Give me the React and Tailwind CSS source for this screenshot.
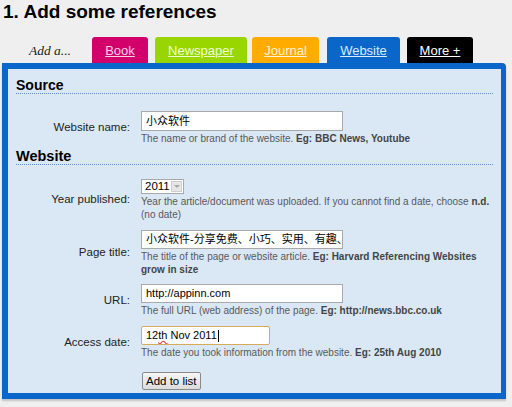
import React from "react";

const tabs = [
  { label: "Book", bg: "bg-[#d1006b]", text: "text-[#f7d3e6]", w: "w-[56px]", ml: "ml-0" },
  { label: "Newspaper", bg: "bg-[#99d600]", text: "text-[#f0ffd0]", w: "w-[92px]", ml: "ml-[7px]" },
  { label: "Journal", bg: "bg-[#ffab00]", text: "text-[#fff3d6]", w: "w-[67px]", ml: "ml-[5px]" },
  { label: "Website", bg: "bg-[#0a66c8]", text: "text-[#dcecff]", w: "w-[73px]", ml: "ml-[8px]" },
  { label: "More +", bg: "bg-black", text: "text-white", w: "w-[66px]", ml: "ml-[7px]" },
];

function Field({ label, children, help, mt }) {
  return (
    <div className={`grid grid-cols-[114px_1fr] gap-x-[11px] ${mt}`}>
      <div className="flex items-center justify-end text-[11.5px] text-[#222]">{label}</div>
      <div>
        {children}
        <div className="mt-[1px] w-[350px] text-[10px] leading-[13px] text-[#585858]">{help}</div>
      </div>
    </div>
  );
}

function TextBox({ value, width = "w-[202px]", height = "h-[19px]", focused, caret }) {
  return (
    <div
      className={`${width} ${height} flex items-center overflow-hidden whitespace-nowrap bg-white px-[4px] text-[11px] text-black ${
        focused ? "border border-[#d8ab5a] rounded-[2px]" : "border border-[#a9a9a9]"
      }`}
      style={{ fontFamily: '"Liberation Sans", "Noto Sans CJK SC", sans-serif' }}
    >
      <span>{value}</span>
      {caret && <span className="ml-[1px] inline-block h-[12px] w-px shrink-0 bg-black" />}
    </div>
  );
}

export default function App() {
  return (
    <div
      className="w-[512px] h-[407px] overflow-hidden bg-[#efefef]"
      style={{ fontFamily: '"Liberation Sans", Arial, sans-serif' }}
    >
      <h1 className="pl-[3px] text-[19px] font-bold leading-[24px] text-black">1. Add some references</h1>

      <div className="mt-[13px] flex h-[26px] items-stretch">
        <div
          className="flex w-[92px] items-center pl-[29px] pt-[2px] text-[13.5px] italic text-[#222]"
          style={{ fontFamily: '"Liberation Serif", serif' }}
        >
          Add a...
        </div>
        {tabs.map((t) => (
          <div
            key={t.label}
            className={`${t.bg} ${t.w} ${t.ml} flex items-center justify-center rounded-t-[3px] pt-[2px] text-[13px] underline ${t.text}`}
          >
            {t.label}
          </div>
        ))}
      </div>

      <div className="ml-[2px] box-border h-[336px] w-[504px] rounded-tr-[4px] border-[6px] border-r-[5px] border-[#0a66c8] bg-[#dae8f6] px-[8px] pt-[8px] shadow-[0_2px_2px_rgba(0,0,0,0.18)]">
        <h2 className="border-b border-dotted border-[#5b8fd0] text-[14px] font-bold leading-[16px] text-black">
          Source
        </h2>

        <Field
          label="Website name:"
          mt="mt-[17px]"
          help={
            <>
              The name or brand of the website. <b className="text-[#444]">Eg: BBC News, Youtube</b>
            </>
          }
        >
          <TextBox value="小众软件" height="h-[20px]" />
        </Field>

        <h2 className="mt-[3px] border-b border-dotted border-[#5b8fd0] text-[14.5px] font-bold leading-[16px] text-black">
          Website
        </h2>

        <Field
          label="Year published:"
          mt="mt-[14px]"
          help={
            <>
              Year the article/document was uploaded. If you cannot find a date, choose{" "}
              <b className="text-[#444]">n.d.</b> (no date)
            </>
          }
        >
          <div className="flex h-[15px] w-[43px] items-center justify-between border border-[#a9a9a9] bg-white pl-[3px] pr-[1px] text-[11.5px] text-black">
            <span>2011</span>
            <span className="flex h-[11px] w-[11px] items-center justify-center border border-[#cfcfcf] bg-[#e6e6e6]">
              <span className="h-0 w-0 border-x-[3px] border-t-[3px] border-x-transparent border-t-[#a8a8a8]" />
            </span>
          </div>
        </Field>

        <Field
          label="Page title:"
          mt="mt-[9px]"
          help={
            <>
              The title of the page or website article.{" "}
              <b className="text-[#444]">Eg: Harvard Referencing Websites grow in size</b>
            </>
          }
        >
          <TextBox value="小众软件-分享免费、小巧、实用、有趣、绿色的软件" />
        </Field>

        <Field
          label="URL:"
          mt="mt-[8px]"
          help={
            <>
              The full URL (web address) of the page. <b className="text-[#444]">Eg: http://news.bbc.co.uk</b>
            </>
          }
        >
          <TextBox value="http://appinn.com" />
        </Field>

        <Field
          label="Access date:"
          mt="mt-[9px]"
          help={
            <>
              The date you took information from the website. <b className="text-[#444]">Eg: 25th Aug 2010</b>
            </>
          }
        >
          <TextBox
            width="w-[129px]"
            focused
            caret
            value={
              <>
                12<span className="underline decoration-wavy decoration-[#e03030]">th</span> Nov 2011
              </>
            }
          />
        </Field>

        <div className="mt-[9px] pl-[126px]">
          <button className="h-[18px] rounded-[2px] border border-[#8a8a8a] bg-gradient-to-b from-[#f6f6f6] to-[#dcdcdc] px-[3px] text-[11.5px] leading-[14px] text-black">
            Add to list
          </button>
        </div>
      </div>
    </div>
  );
}
